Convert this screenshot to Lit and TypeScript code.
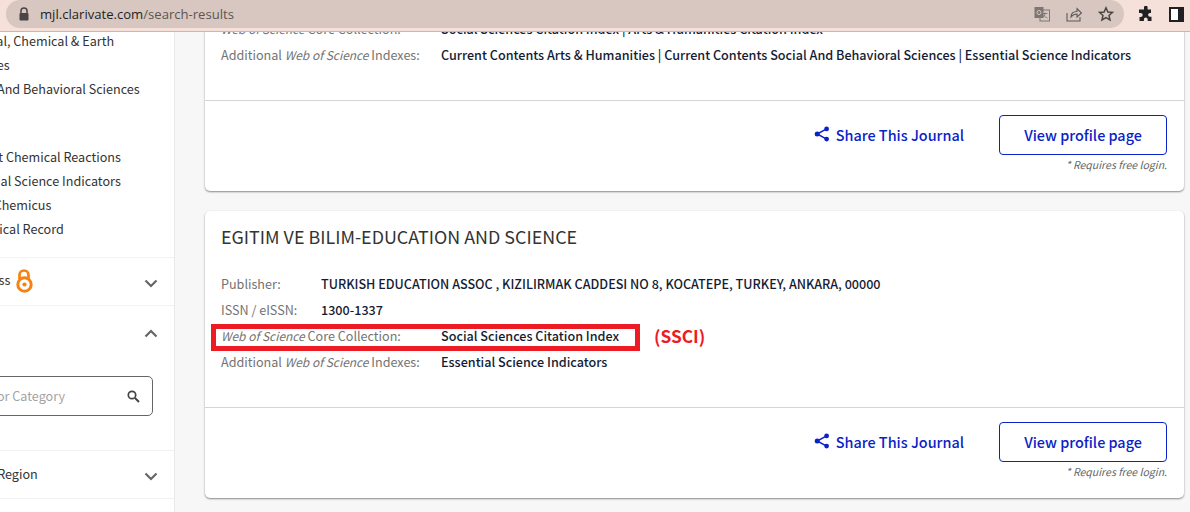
import { LitElement, html, css } from "lit";
import { customElement } from "lit/decorators.js";

const chevron = (up: boolean) => html`<svg class="chev" viewBox="0 0 14 9" width="14" height="9">
  <path d=${up ? "M1.5 7.5 7 2l5.5 5.5" : "M1.5 1.5 7 7l5.5-5.5"} fill="none" stroke="#666" stroke-width="2.2"/></svg>`;

const shareIcon = html`<svg class="share-icon" viewBox="0 0 16 16" width="16" height="16">
  <g fill="#0a22c8"><circle cx="3.2" cy="8" r="2.5"/><circle cx="12.6" cy="2.9" r="2.4"/><circle cx="12.6" cy="13.1" r="2.4"/></g>
  <path d="M12.6 2.9 3.2 8l9.4 5.1" fill="none" stroke="#0a22c8" stroke-width="1.5"/></svg>`;

const footer = html`<div class="footer">
  <a class="share">${shareIcon}<span>Share This Journal</span></a>
  <div class="cta"><button class="btn">View profile page</button><div class="note">* Requires free login.</div></div>
</div>`;

@customElement("app-root")
export class AppRoot extends LitElement {
  static styles = css`
    :host { display: block; width: 1190px; height: 512px; overflow: hidden; background: #f7f7f7;
      font-family: "Noto Sans CJK SC", "Open Sans", sans-serif; font-size: 12.6px; color: #222; }
    .chrome { height: 32px; box-sizing: border-box; background: #f5e1da; border-bottom: 1px solid #c8b7b1;
      display: flex; align-items: flex-start; position: relative; z-index: 2; padding-left: 6px; }
    .pill { width: 1118px; height: 28px; background: #d8c7c0; border-radius: 14px;
      display: flex; align-items: center; padding-left: 12px; box-sizing: border-box; }
    .lock { margin-right: 10px; flex: none; }
    .url { font-family: "Open Sans", sans-serif; font-size: 13.1px; color: #1f1f1f; }
    .url span { color: #5c5553; }
    .pill-icons { margin-left: auto; display: flex; align-items: center; gap: 16px; padding-right: 10px; }
    .ext { display: flex; align-items: center; gap: 15px; margin-left: 14px; height: 28px; }
    .body { display: flex; height: 480px; overflow: hidden; }
    .side { width: 175px; flex: none; box-sizing: border-box; background: #fff; border-right: 1px solid #eaeaea; overflow: hidden; }
    .side-inner { margin-left: -65px; width: 239px; margin-top: -3px; color: #333; }
    .list { padding-left: 23.5px; white-space: nowrap; }
    .list div { height: 24px; line-height: 24px; }
    .list.first { margin-bottom: 44px; }
    .list.second { padding-bottom: 16px; }
    .sec { border-top: 1px solid #f2f2f2; }
    .head { display: flex; align-items: center; justify-content: space-between; padding: 0 16px 0 2px; white-space: nowrap; }
    .reg.head { padding-left: 4px; }
    .oa { height: 47px; }
    .oa .txt { display: flex; align-items: center; gap: 6px; }
    .oa .lbl { position: relative; top: -2px; }
    .oa-icon { position: relative; top: -1px; }
    .cat { height: 144px; display: block; }
    .cat .head { height: 56px; }
    .reg { height: 47px; }
    .reg .lbl { position: relative; top: -1px; }
    .chev { position: relative; top: 2px; }
    .cat .chev { top: -1px; }
    .search { margin: 14px 21px 0 0; height: 40px; box-sizing: border-box; border: 1px solid #666; border-radius: 5px;
      display: flex; align-items: center; justify-content: space-between; padding: 0 12px 2px 14px; color: #a3a3a3; white-space: nowrap; }
    .search svg { position: relative; top: 1px; }
    .last { border-top: 1px solid #f2f2f2; height: 20px; }
    .main { flex: 1; padding: 0 6px 0 30px; min-width: 0; }
    .card { background: #fff; border-radius: 5px; box-shadow: 0 1px 2px rgba(0,0,0,.45); margin-bottom: 20px; }
    .card.one { margin-top: -29px; padding-top: 13px; }
    .title { font-size: 17.9px; line-height: 26px; color: #333; padding: 12px 16px 1px; margin-bottom: 21px; }
    .rows { padding: 0 16px 32px; }
    .row { display: flex; height: 26px; line-height: 26px; white-space: nowrap; position: relative; }
    .k { color: #737373; flex: none; }
    .k i { font-size: 11.95px; }
    .k.s { width: 100px; }
    .k.w { width: 220px; }
    .v { color: #141c34; font-weight: 500; }
    .mark { position: absolute; left: -10px; top: 1px; width: 429px; height: 27px; box-sizing: border-box; border: 5px solid #ed1c24; }
    .ssci { position: absolute; left: 433px; top: 0; color: #ed1c24; font-weight: 700; font-size: 17.3px; line-height: 26px; }
    .footer { border-top: 1px solid #d4d4d4; display: flex; justify-content: flex-end; padding: 14px 17px 16px 0; gap: 35px; }
    .share { display: flex; align-items: center; gap: 6px; height: 38px; color: #0a22c8; font-weight: 500; font-size: 14.4px; }
    .cta { display: flex; flex-direction: column; align-items: flex-end; }
    .btn { width: 168px; height: 40px; background: #fff; border: 1px solid #0a22c8; border-radius: 4px; color: #0a22c8;
      font: 500 14.4px/20px "Noto Sans CJK SC", sans-serif; padding: 0; }
    .note { font-size: 10.5px; font-style: italic; color: #666; line-height: 20px; }
  `;

  render() {
    return html`
      <div class="chrome">
        <div class="pill">
          <svg class="lock" viewBox="0 0 12 14" width="12" height="14"><path d="M3 6V4a3 3 0 0 1 6 0v2" fill="none" stroke="#4a4543" stroke-width="1.5"/><rect x="1.5" y="6" width="9" height="7.5" rx="1" fill="#4a4543"/></svg>
          <div class="url">mjl.clarivate.com<span>/search-results</span></div>
          <div class="pill-icons">
            <svg viewBox="0 0 16 16" width="16" height="16"><rect x=".5" y="1" width="9" height="11" fill="#7d7673"/><rect x="6" y="4" width="9.5" height="11" fill="none" stroke="#7d7673"/><path d="M8.5 7.5h5M11 6.500v1c0 2-1.500 3.500-2.500 4M9.500 9c.8 1.200 2.500 2.500 4 3" fill="none" stroke="#7d7673" stroke-width=".9"/><circle cx="5" cy="6.500" r="2" fill="none" stroke="#d8c7c0" stroke-width="1"/></svg>
            <svg viewBox="0 0 16 16" width="16" height="16"><path d="M1 7v8h13v-4" fill="none" stroke="#5e5856" stroke-width="1.100"/><path d="M5 11c0-4 3-5.500 6-5.500V2.500l4.500 4.500-4.500 4V8c-3 0-4.500 1-6 3z" fill="none" stroke="#5e5856" stroke-width="1.100"/></svg>
            <svg viewBox="0 0 16 16" width="16" height="16"><path d="M8 1.800l1.900 4.200 4.500.4-3.400 3 1 4.500L8 11.500l-4 2.400 1-4.500-3.400-3 4.500-.4z" fill="none" stroke="#4a4543" stroke-width="1.500"/></svg>
          </div>
        </div>
        <div class="ext">
          <svg viewBox="0 0 16 16" width="16" height="16"><path d="M6 1.500a1.800 1.800 0 0 1 3.600 0V3.500H13v3.400h-1a1.900 1.900 0 0 0 0 3.800h1.500V15H9.700v-1.500a1.900 1.900 0 0 0-3.800 0V15H1.500v-4h1.200a2 2 0 0 0 0-4H1V3.500h5z" fill="#1f2022"/></svg>
          <svg viewBox="0 0 15 15" width="15" height="15"><rect x="1" y="1" width="13" height="13" fill="#fff" stroke="#1f2022" stroke-width="2"/><rect x="9" y="1" width="5" height="13" fill="#1f2022"/></svg>
        </div>
      </div>
      <div class="body">
        <aside class="side"><div class="side-inner">
          <div class="list first">
            <div>Physical, Chemical &amp; Earth</div><div>Sciences</div><div>Social And Behavioral Sciences</div>
          </div>
          <div class="list second">
            <div>Current Chemical Reactions</div><div>Essential Science Indicators</div><div>Index Chemicus</div><div>Zoological Record</div>
          </div>
          <div class="sec head oa"><div class="txt"><span class="lbl">Open Access</span>
            <svg class="oa-icon" viewBox="0 0 17 24" width="17" height="24"><path d="M3.500 10V6a4.500 4.500 0 0 1 9 0v4" fill="none" stroke="#f68212" stroke-width="2.700"/><circle cx="8.500" cy="15.500" r="6.700" fill="none" stroke="#f68212" stroke-width="3"/><circle cx="8.500" cy="15.500" r="2.100" fill="#f68212"/></svg>
          </div>${chevron(false)}</div>
          <div class="sec cat">
            <div class="head"><span>Category</span>${chevron(true)}</div>
            <div class="search"><span>Search for Category</span>
              <svg viewBox="0 0 13 13" width="13" height="13"><circle cx="5" cy="5" r="3.700" fill="none" stroke="#444" stroke-width="1.700"/><path d="M8 8l4 4" stroke="#444" stroke-width="2"/></svg>
            </div>
          </div>
          <div class="sec head reg"><span class="lbl">Country / Region</span>${chevron(false)}</div>
          <div class="last"></div>
        </div></aside>
        <main class="main">
          <section class="card one">
            <div class="rows">
              <div class="row"><span class="k w"><i>Web of Science</i> Core Collection:</span><span class="v">Social Sciences Citation Index | Arts &amp; Humanities Citation Index</span></div>
              <div class="row"><span class="k w">Additional <i>Web of Science</i> Indexes:</span><span class="v">Current Contents Arts &amp; Humanities | Current Contents Social And Behavioral Sciences | Essential Science Indicators</span></div>
            </div>
            ${footer}
          </section>
          <section class="card">
            <div class="title">EGITIM VE BILIM-EDUCATION AND SCIENCE</div>
            <div class="rows">
              <div class="row"><span class="k s">Publisher:</span><span class="v">TURKISH EDUCATION ASSOC , KIZILIRMAK CADDESI NO 8, KOCATEPE, TURKEY, ANKARA, 00000</span></div>
              <div class="row"><span class="k s">ISSN / eISSN:</span><span class="v">1300-1337</span></div>
              <div class="row"><span class="k w"><i>Web of Science</i> Core Collection:</span><span class="v">Social Sciences Citation Index</span>
                <div class="mark"></div><div class="ssci">(SSCI)</div></div>
              <div class="row"><span class="k w">Additional <i>Web of Science</i> Indexes:</span><span class="v">Essential Science Indicators</span></div>
            </div>
            ${footer}
          </section>
        </main>
      </div>
    `;
  }
}
